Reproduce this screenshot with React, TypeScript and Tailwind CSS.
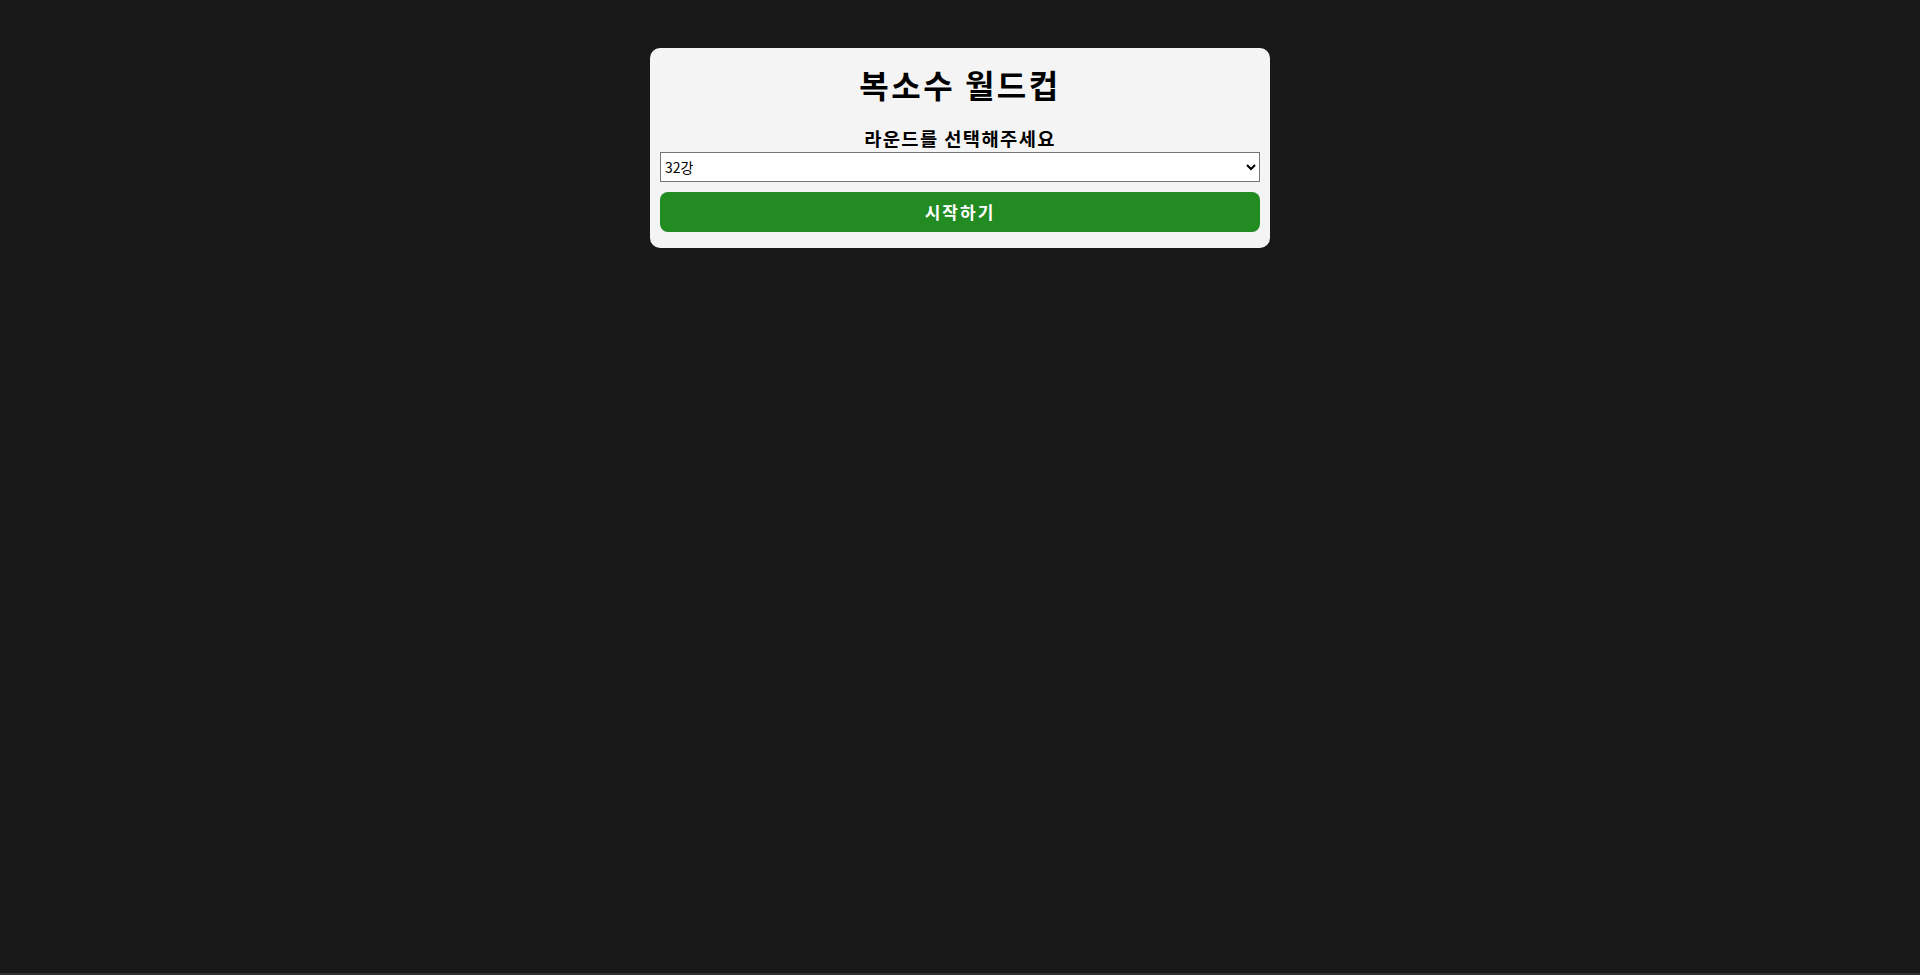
import { useState } from "react";

export default function App() {
  const [round, setRound] = useState("32");

  return (
    <div
      className="h-screen flex flex-col bg-[#181818]"
      style={{ fontFamily: '"Noto Sans CJK KR", "Noto Sans", sans-serif' }}
    >
      <div className="flex-1 flex justify-center pt-[48px]">
        <div className="w-[620px] h-fit bg-[#f4f4f4] rounded-[10px] px-[10px] pt-[10px] pb-[16px] flex flex-col">
          <h1 className="mt-[6px] text-center text-[32px] leading-[40px] font-bold tracking-[2.5px] text-black">
            복소수 월드컵
          </h1>
          <h3 className="mt-[22px] text-center text-[18.72px] leading-[24px] font-bold tracking-[1.4px] text-black">
            라운드를 선택해주세요
          </h3>
          <select
            value={round}
            onChange={(e) => setRound(e.target.value)}
            className="mt-[2px] w-full h-[30px] bg-white border border-[#767676] text-[14px] text-black"
          >
            <option value="32">32강</option>
            <option value="16">16강</option>
            <option value="8">8강</option>
            <option value="4">4강</option>
          </select>
          <button
            type="button"
            className="mt-[10px] w-full h-[40px] bg-[#228b22] rounded-[8px] text-white text-[17px] font-bold tracking-[2px]"
          >
            시작하기
          </button>
        </div>
      </div>
      <div className="h-[2px] bg-[#333333]" />
    </div>
  );
}
